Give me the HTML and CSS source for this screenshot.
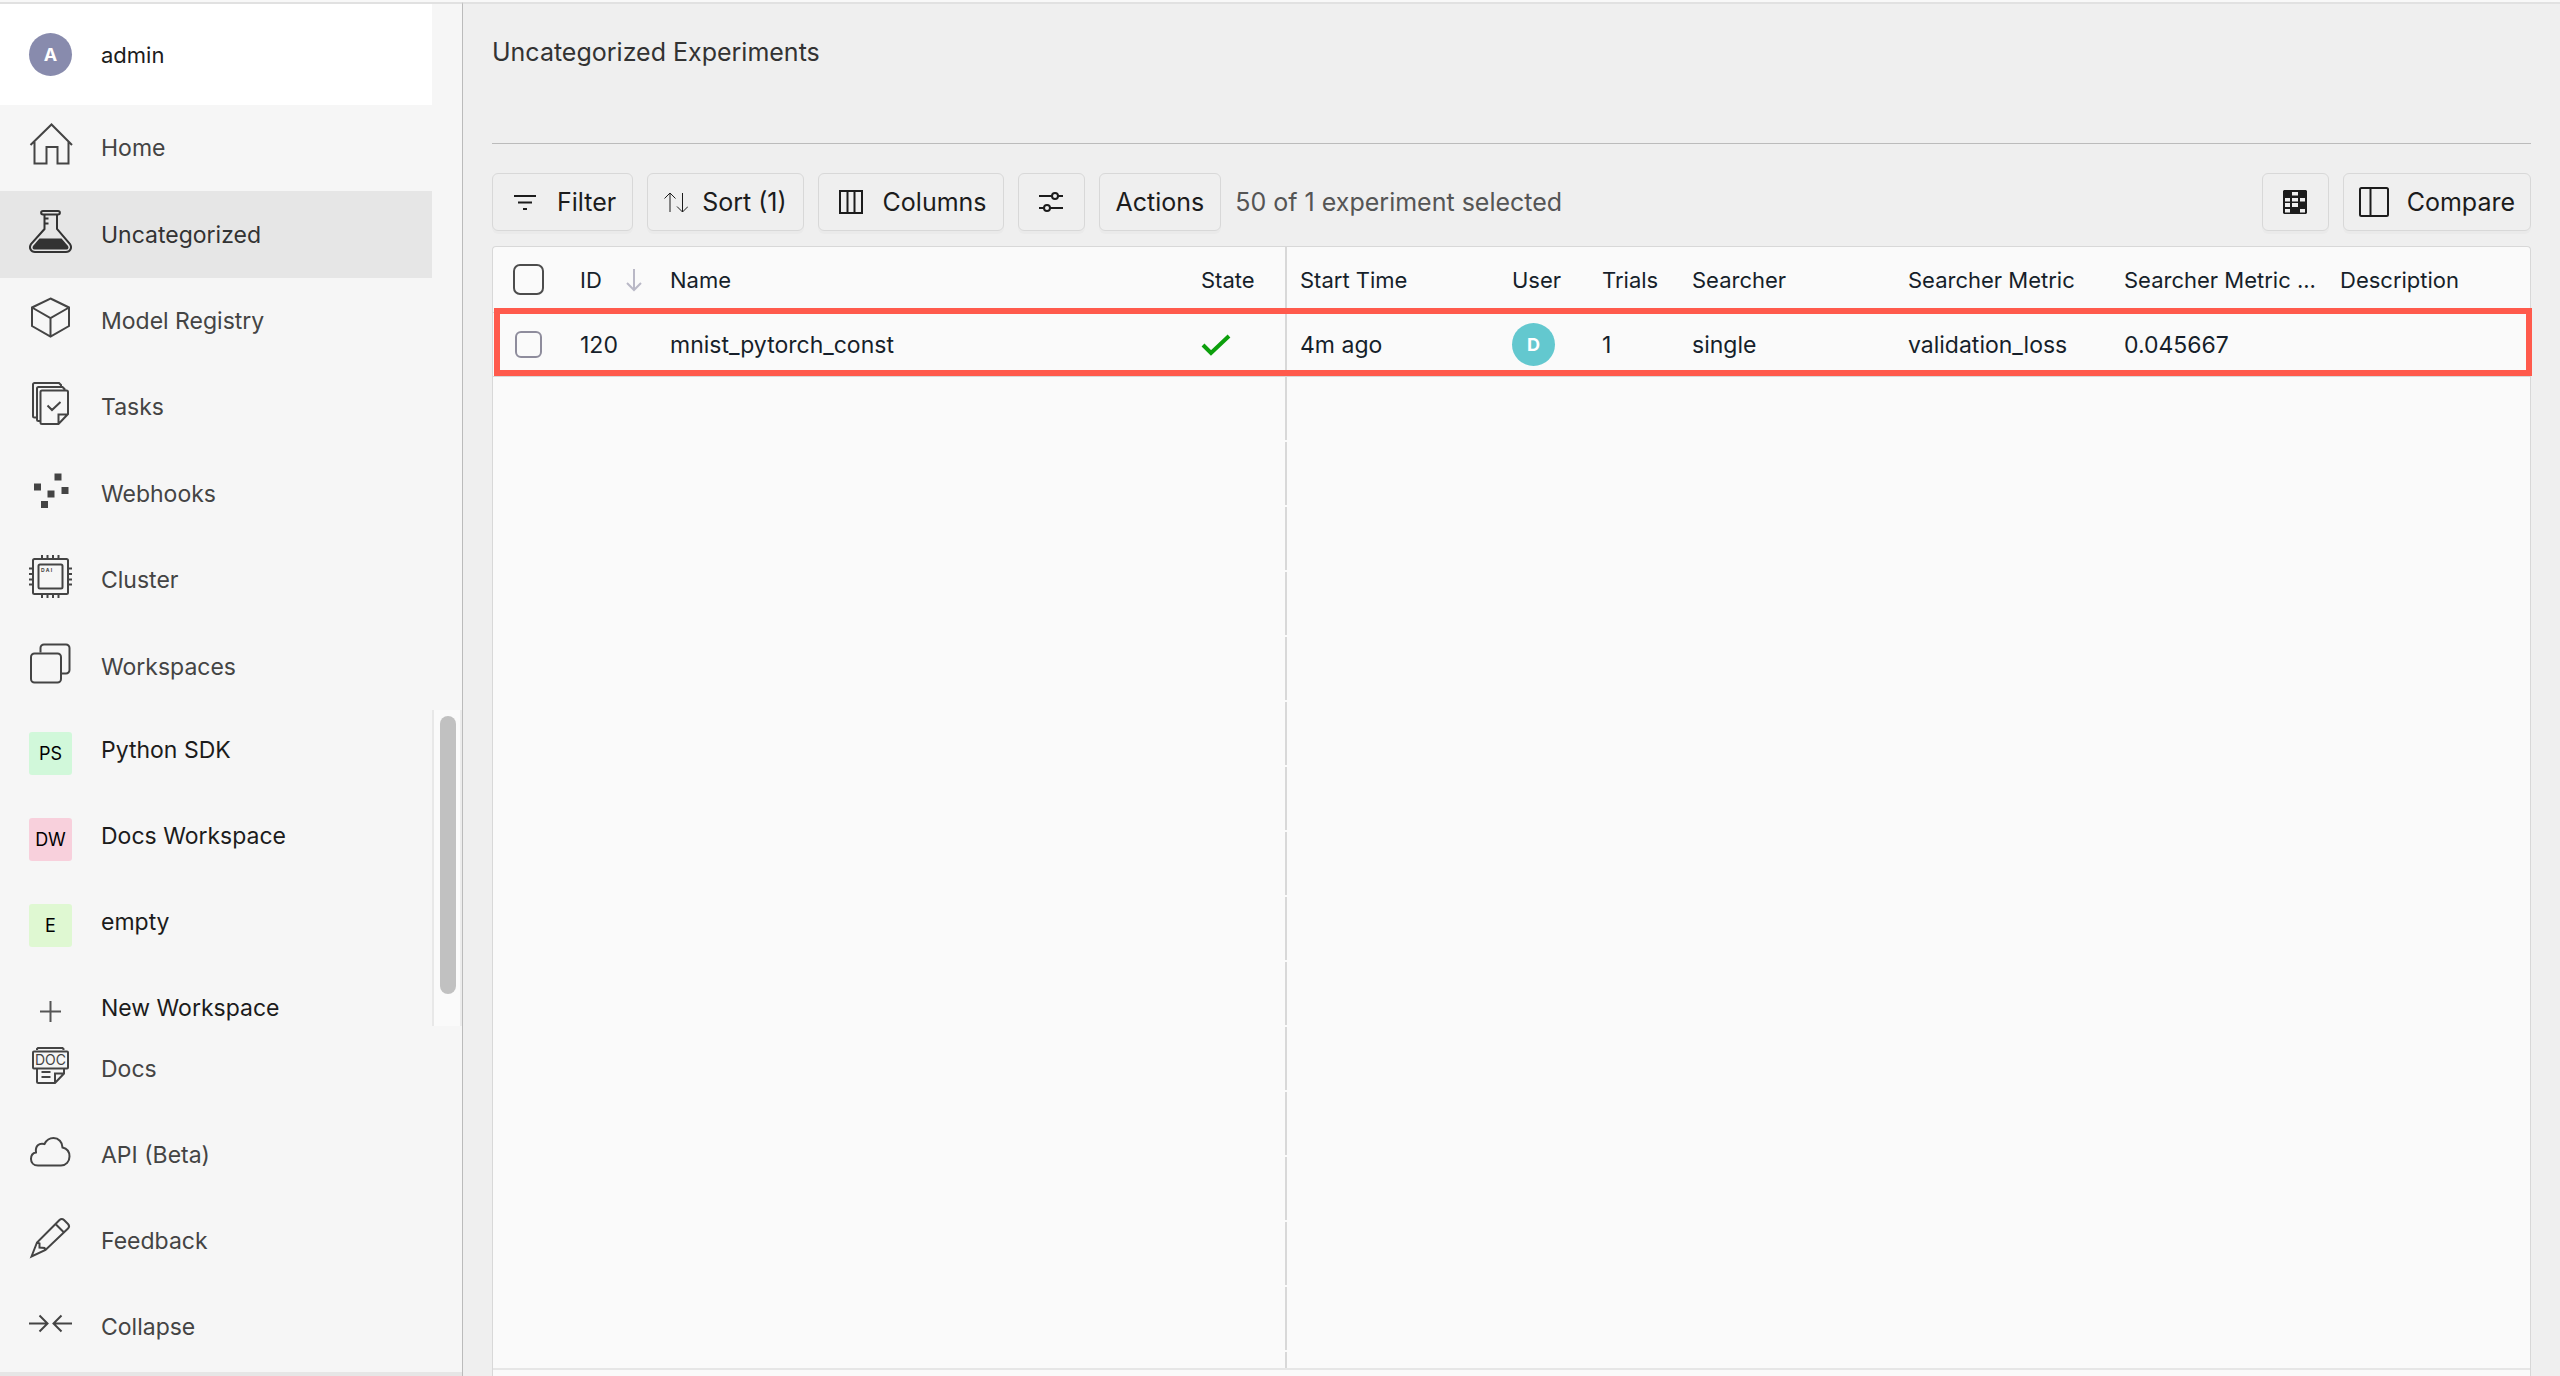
FILE: index.html
```html
<!DOCTYPE html>
<html lang="en">
<head>
  <meta charset="UTF-8">
  <meta name="viewport" content="width=device-width, initial-scale=1.0">
  <title>Uncategorized Experiments</title>
  <link rel="stylesheet" href="styles.css">
</head>
<body>
  <div class="app">
    <!-- Sidebar -->
    <aside class="sidebar">
      <button class="user-menu" type="button">
        <span class="avatar">A</span>
        <span>admin</span>
      </button>

      <nav class="nav nav-primary">
        <a href="#home" class="nav-item">
          <svg class="nav-icon" viewBox="0 0 43 43"><path d="M1.5 22 22.5 1.5 43 22M5.5 19v21.500h12V24h11v16.500h11V19"/></svg>
          <span>Home</span>
        </a>
        <a href="#uncategorized" class="nav-item active">
          <svg class="nav-icon" viewBox="0 0 43 43"><path d="M15.500 4.500V19L2 34c-2.500 4 0 8 4 8h31c4 0 6.500-4 4-8L28 19V4.500M14 1h15c2.500 0 2.500 3.500 0 3.500H14c-2.500 0-2.500-3.500 0-3.500ZM15.500 8.500h4M15.500 13.500h4"/><path class="solid" d="M10.500 28.500h22l6.500 7.500c1 1.500.5 3.500-1.500 3.500h-32c-2 0-2.500-2-1.500-3.500z"/></svg>
          <span>Uncategorized</span>
        </a>
        <a href="#models" class="nav-item">
          <svg class="nav-icon" viewBox="0 0 43 43"><path d="m21.500 2.500 18.500 9v18.500l-18.500 10.500L3 30V11.500zM3 11.500 21.500 22 40 11.500M21.500 22v18.500"/></svg>
          <span>Model Registry</span>
        </a>
        <a href="#tasks" class="nav-item">
          <svg class="nav-icon" viewBox="0 0 43 43"><path d="M7.500 35.500H5.500a1.500 1.500 0 0 1-1.500-1.500V2.500A1.500 1.500 0 0 1 5.500 1H30l2 2v1.500M11.500 39H9.500A1.500 1.500 0 0 1 8 37.500V6.500A1.500 1.500 0 0 1 9.500 5H33.500l2 2v1M13 8.500h24.500a1.500 1.500 0 0 1 1.500 1.500v22L29.500 42H13a1.500 1.500 0 0 1-1.500-1.500V10A1.500 1.500 0 0 1 13 8.500ZM29.500 42V32.500H39M18.500 23.500l4.500 4.500 8.500-8"/></svg>
          <span>Tasks</span>
        </a>
        <a href="#webhooks" class="nav-item">
          <svg class="nav-icon" viewBox="0 0 43 43"><path class="solid" d="M25.500 4.500h7v7h-7zM5 14.500h7v7H5zM32.500 18h7v7h-7zM18.500 21.500h7v7h-7zM12 32h7v7h-7z"/></svg>
          <span>Webhooks</span>
        </a>
        <a href="#cluster" class="nav-item">
          <svg class="nav-icon" viewBox="0 0 43 43"><rect x="4" y="4" width="35" height="35" rx="1.500"/><rect x="9.500" y="9.500" width="24" height="24" rx="1.500"/><path d="M13 0v4M18.500 0v4M24 0v4M29.500 0v4M13 39v4M18.500 39v4M24 39v4M29.500 39v4M0 13.500h4M0 19h4M0 24.500h4M0 29.500h4M39 13.500h4M39 19h4M39 24.500h4M39 29.500h4"/><text class="chip-text" x="12" y="17">D A I</text></svg>
          <span>Cluster</span>
        </a>
        <a href="#workspaces" class="nav-item">
          <svg class="nav-icon" viewBox="0 0 43 43"><rect x="2" y="11.500" width="30" height="29" rx="3.500"/><path d="M11.500 10.500V6A3.500 3.500 0 0 1 15 2.500h22A3.500 3.500 0 0 1 40.500 6v22a3.500 3.500 0 0 1-3.500 3.500h-4"/></svg>
          <span>Workspaces</span>
        </a>
      </nav>

      <!-- Pinned workspaces -->
      <div class="pinned">
        <div class="pinned-list">
          <a href="#python-sdk" class="pinned-item"><span class="tile tile-green">PS</span><span class="pinned-label">Python SDK</span></a>
          <a href="#docs-workspace" class="pinned-item"><span class="tile tile-pink">DW</span><span class="pinned-label">Docs Workspace</span></a>
          <a href="#empty" class="pinned-item"><span class="tile tile-lime">E</span><span class="pinned-label">empty</span></a>
          <button type="button" class="pinned-item">
            <svg class="plus-icon" viewBox="0 0 43 43"><path d="M21.500 11v21M11 21.500h21"/></svg>
            <span class="pinned-label">New Workspace</span>
          </button>
        </div>
        <div class="scroll-track"><div class="scroll-thumb"></div></div>
      </div>

      <div class="nav nav-bottom">
        <a href="#docs" class="nav-item">
          <svg class="nav-icon" viewBox="0 0 43 43"><rect x="4" y="7.500" width="35" height="17" rx="1"/><path d="M8 6V5l1-1h24.500l1 1v1M8 24.500V37.500A1.500 1.500 0 0 0 9.500 39H26l9-9.500v-5M26 39v-9.500h9M12.500 28h9M12.500 33h9"/><text class="doc-text" x="21.500" y="21">DOC</text></svg>
          <span>Docs</span>
        </a>
        <a href="#api" class="nav-item">
          <svg class="nav-icon" viewBox="0 0 43 43"><path d="M9 35.500C4.500 35.500 2 32.500 2 29c0-3.500 2-6 5-6.500C6 16 10 12.500 15.500 14 17.500 10 21 8 24.500 8c5 0 9 4 9 9.500 4.500 1 7 4.500 7 9 0 5-3.500 9-8.500 9Z"/></svg>
          <span>API (Beta)</span>
        </a>
        <a href="#feedback" class="nav-item">
          <svg class="nav-icon" viewBox="0 0 43 43"><path d="m2.500 40.500 5.500-14L30.500 4c1.500-1.500 3-1.500 4.500 0l4 4c1.500 1.500 1.500 3 0 4.500L16.500 34zM26.500 8l9 9M8 26.500l2.500 1v4l5 .5 1 2"/></svg>
          <span>Feedback</span>
        </a>
        <a href="#collapse" class="nav-item">
          <svg class="nav-icon" viewBox="0 0 43 43"><path d="M0 21.500h18.500M10.500 13.500l8 8-8 8M43 21.500H24.500M32.500 13.500l-8 8 8 8"/></svg>
          <span>Collapse</span>
        </a>
      </div>
    </aside>

    <!-- Main Content -->
    <main class="main">
      <header class="page-header">
        <h1 class="page-title">Uncategorized Experiments</h1>
      </header>

      <div class="toolbar">
        <button type="button" class="btn btn-filter">
          <svg class="btn-icon" viewBox="0 0 24 24"><path d="M1 6h22M5 12.500h14M10 19h4"/></svg>
          Filter
        </button>
        <button type="button" class="btn btn-sort">
          <svg class="btn-icon thin" viewBox="0 0 24 24"><path d="M6 22V3M.5 8.500 6 3l5.500 5.500M18.500 3v19M13 16.500l5.500 5.500 5.500-5.500"/></svg>
          Sort (1)
        </button>
        <button type="button" class="btn btn-columns">
          <svg class="btn-icon" viewBox="0 0 24 24"><path d="M1 1h22v22H1zM8.500 1v22M15.500 1v22"/></svg>
          Columns
        </button>
        <button type="button" class="btn btn-square" aria-label="Settings">
          <svg class="btn-icon" viewBox="0 0 24 24"><path d="M0 6h13M19 6h5M0 18h5M11 18h13"/><circle cx="16" cy="6" r="3"/><circle cx="8" cy="18" r="3"/></svg>
        </button>
        <button type="button" class="btn">Actions</button>
        <span class="selection">50 of 1 experiment selected</span>
        <button type="button" class="btn btn-square push-right" aria-label="Table density">
          <svg class="btn-icon" viewBox="0 0 24 24"><path class="solid" fill-rule="evenodd" d="M1 0h22l1 1v22l-1 1H1l-1-1V1zM9 2v3.500h6V2zM2 8v3.500h5V8zM9 8v3.500h6V8zM17 8v3.500h5V8zM2 13v4h5v-4zM9 13v4h6v-4zM2 19v3.500h5V19zM17 19v3.500h5V19z"/></svg>
        </button>
        <button type="button" class="btn btn-compare">
          <svg class="compare-icon" viewBox="0 0 30 30"><rect x="1" y="1" width="28" height="28" rx="1.500"/><path d="M11.500 1v28"/></svg>
          Compare
        </button>
      </div>

      <!-- Experiment table -->
      <section class="table-panel">
        <table class="experiments">
          <colgroup>
            <col class="col-check">
            <col class="col-small">
            <col class="col-name">
            <col class="col-state">
            <col class="col-start">
            <col class="col-small">
            <col class="col-small">
            <col class="col-wide">
            <col class="col-wide">
            <col class="col-wide">
            <col>
          </colgroup>
          <thead>
            <tr>
              <th class="check-cell"><input type="checkbox" class="check check-all" aria-label="Select all"></th>
              <th>
                <span class="sorted">ID
                  <svg class="sort-arrow" viewBox="0 0 16 24"><path d="M8 1v21M1 15l7 7 7-7"/></svg>
                </span>
              </th>
              <th>Name</th>
              <th>State</th>
              <th class="split">Start Time</th>
              <th>User</th>
              <th>Trials</th>
              <th>Searcher</th>
              <th>Searcher Metric</th>
              <th>Searcher Metric ...</th>
              <th>Description</th>
            </tr>
          </thead>
          <tbody>
            <tr>
              <td class="check-cell"><input type="checkbox" class="check" aria-label="Select experiment 120"></td>
              <td>120</td>
              <td>mnist_pytorch_const</td>
              <td><svg class="state-icon" viewBox="0 0 30 22"><path d="M2 11l8 8L28 2"/></svg></td>
              <td class="split">4m ago</td>
              <td><span class="avatar avatar-teal">D</span></td>
              <td>1</td>
              <td>single</td>
              <td>validation_loss</td>
              <td>0.045667</td>
              <td></td>
            </tr>
          </tbody>
        </table>
        <div class="row-highlight"></div>
        <div class="table-rest"></div>
        <div class="table-scroll"></div>
      </section>
    </main>
  </div>
</body>
</html>
```
FILE: styles.css
```css
* {
  margin: 0;
  padding: 0;
  box-sizing: border-box;
}

:root {
  --stage: #efefef;
  --surface: #f6f6f6;
  --panel: #fafafa;
  --border: #d8d8d8;
  --border-strong: #bbbbbb;
  --text: #1c1c1c;
  --text-muted: #444444;
  --highlight: #ff5a4c;
}

body {
  font-family: Inter, "Liberation Sans", sans-serif;
  font-size: 23px;
  color: var(--text);
  background: var(--stage);
}

button {
  font: inherit;
  color: inherit;
  background: none;
  border: none;
  cursor: pointer;
}

a {
  color: inherit;
  text-decoration: none;
}

svg {
  fill: none;
  stroke: currentColor;
  stroke-width: 2;
  flex-shrink: 0;
}

.solid {
  fill: currentColor;
  stroke: none;
}

.app {
  display: flex;
  height: 100vh;
  border-top: 2px solid #f8f8f8;
}

/* Sidebar */
.sidebar {
  width: 463px;
  flex-shrink: 0;
  display: flex;
  flex-direction: column;
  background: var(--surface);
  border-top: 2px solid #e1e1e1;
  border-right: 1px solid var(--border-strong);
}

.user-menu {
  display: flex;
  align-items: center;
  gap: 29px;
  width: 432px;
  height: 101px;
  flex-shrink: 0;
  padding-left: 29px;
  background: #ffffff;
  font-size: 22px;
}

.avatar {
  display: flex;
  align-items: center;
  justify-content: center;
  width: 43px;
  height: 43px;
  border-radius: 50%;
  background: #888bad;
  color: #ffffff;
  font-size: 18px;
  font-weight: 700;
}

.avatar-teal {
  background: #63c8cf;
}

.nav {
  flex-shrink: 0;
  width: 432px;
  color: var(--text-muted);
}

/* seven rows share the height evenly */
.nav-primary {
  display: grid;
  grid-auto-rows: 1fr;
  height: 605px;
}

.nav-item {
  display: flex;
  align-items: center;
  gap: 29px;
  min-height: 86px;
  padding-left: 29px;
}

.nav-item.active {
  background: #e6e6e6;
  color: #333333;
}

.nav-icon {
  width: 43px;
  height: 43px;
  margin-bottom: 7px;
  overflow: visible;
}

.chip-text {
  fill: currentColor;
  stroke: none;
  font-size: 5px;
  font-weight: 700;
}

.doc-text {
  fill: currentColor;
  stroke: none;
  font-size: 14px;
  text-anchor: middle;
}

.pinned {
  display: flex;
  flex: 1;
  min-height: 0;
  overflow: hidden;
}

.pinned-list {
  flex: 1;
  overflow: hidden;
}

.pinned-item {
  display: flex;
  align-items: center;
  gap: 29px;
  width: 100%;
  height: 86px;
  padding-left: 29px;
}

.pinned-label {
  margin-bottom: 6px;
}

.tile {
  display: flex;
  align-items: center;
  justify-content: center;
  width: 43px;
  height: 43px;
  border-radius: 3px;
  color: #000000;
  font-size: 18px;
}

.tile-green {
  background: #d1f8da;
}

.tile-pink {
  background: #f8d0dc;
}

.tile-lime {
  background: #dff8d2;
}

.plus-icon {
  width: 43px;
  height: 43px;
  color: #555555;
}

.scroll-track {
  width: 30px;
  padding: 6px;
  background: var(--panel);
  border-left: 2px solid #e8e8e8;
  border-right: 2px solid #ececec;
}

.scroll-thumb {
  width: 16px;
  height: 278px;
  border-radius: 8px;
  background: #c1c1c1;
}

.nav-bottom {
  width: 100%;
  padding-bottom: 2px;
  border-bottom: 4px solid #e6e6e6;
}

/* Main Content */
.main {
  flex: 1;
  min-width: 0;
  display: flex;
  flex-direction: column;
  padding: 0 29px;
  border-top: 2px solid #e1e1e1;
}

.page-header {
  height: 140px;
  flex-shrink: 0;
  padding-top: 34px;
  border-bottom: 1px solid var(--border-strong);
}

.page-title {
  color: #333333;
  font-size: 25px;
  font-weight: 400;
  line-height: 28px;
}

.toolbar {
  display: flex;
  align-items: center;
  gap: 14px;
  padding: 29px 0 15px;
  font-size: 25px;
}

.btn {
  display: flex;
  align-items: center;
  justify-content: center;
  gap: 20px;
  height: 58px;
  padding: 0 16px;
  border: 1px solid var(--border);
  border-radius: 6px;
  box-shadow: 0 3px 0 rgba(0, 0, 0, 0.02);
}

.btn-filter,
.btn-columns {
  padding-left: 20px;
}

.btn-sort {
  gap: 14px;
}

.btn-square {
  width: 67px;
}

.btn-compare {
  gap: 18px;
  padding: 0 15px;
}

.push-right {
  margin-left: auto;
}

.btn-icon {
  width: 24px;
  height: 24px;
}

.btn-icon.thin {
  stroke-width: 1;
}

.compare-icon {
  width: 30px;
  height: 30px;
}

.selection {
  color: #555555;
}

/* Experiment table */
.table-panel {
  position: relative;
  flex: 1;
  display: flex;
  flex-direction: column;
  background: var(--panel);
  border: 1px solid var(--border);
  border-bottom: none;
  border-radius: 4px 4px 0 0;
}

.experiments {
  width: 100%;
  table-layout: fixed;
  border-collapse: separate;
  border-spacing: 0;
  color: #161f2a;
}

.experiments th,
.experiments td {
  padding: 0 0 0 15px;
  text-align: left;
  vertical-align: middle;
  white-space: nowrap;
  border-bottom: 1px solid var(--border);
}

.experiments th {
  height: 66px;
  font-size: 22px;
  font-weight: 400;
}

.experiments td {
  height: 64px;
  font-size: 23px;
}

.experiments .split {
  border-left: 2px solid var(--border);
  padding-left: 13px;
}

.col-check {
  width: 72px;
}

.col-small {
  width: 90px;
}

.col-name {
  width: 531px;
}

.col-state {
  width: 99px;
}

.col-start {
  width: 212px;
}

.col-wide {
  width: 216px;
}

.experiments .check-cell {
  padding: 0 15px 0 14px;
  text-align: center;
}

.check {
  appearance: none;
  display: block;
  width: 27px;
  height: 27px;
  margin: 0 auto;
  border: 2px solid #8e8c9c;
  border-radius: 6px;
}

.check-all {
  width: 31px;
  height: 31px;
  border-color: #4c4c4c;
  border-radius: 7px;
}

.sorted {
  display: flex;
  align-items: center;
  gap: 24px;
}

.sort-arrow {
  width: 16px;
  height: 24px;
  color: #b9b8c6;
}

.state-icon {
  display: block;
  width: 30px;
  height: 22px;
  color: #0c9f0c;
  stroke-width: 4;
}

/* red frame drawn over the selected row */
.row-highlight {
  position: absolute;
  top: 61px;
  left: 1px;
  right: -2px;
  height: 68px;
  border: 6px solid var(--highlight);
}

/* frozen column divider, broken at every row line */
.table-rest {
  flex: 1;
  margin-left: 792px;
  background: repeating-linear-gradient(to bottom, var(--border) 0, var(--border) 63px, var(--panel) 63px, var(--panel) 65px) left top / 2px 100% no-repeat;
}

.table-scroll {
  height: 8px;
  border-top: 2px solid #e6e6e6;
}
```
